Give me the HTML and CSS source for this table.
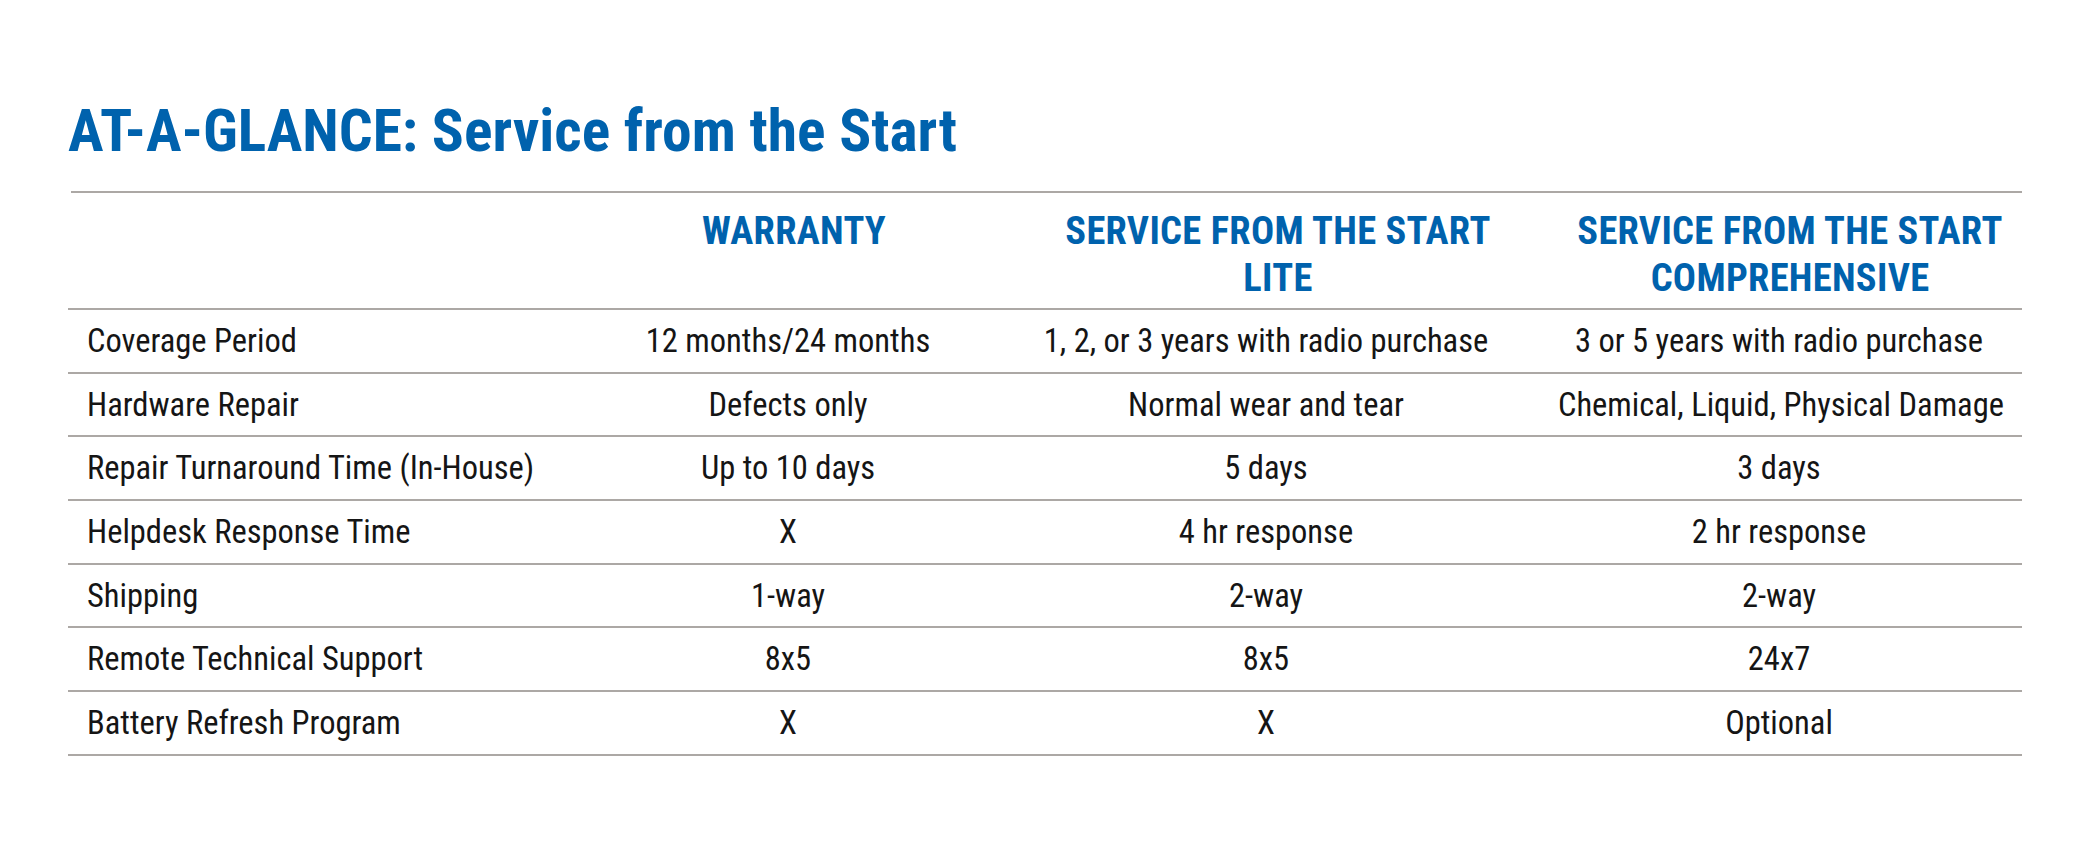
FILE: index.html
```html
<!DOCTYPE html>
<html lang="en">
<head>
<meta charset="utf-8">
<title>AT-A-GLANCE: Service from the Start</title>
<link rel="stylesheet" href="styles.css">
</head>
<body>
<main class="page">
  <h1 class="title">AT-A-GLANCE: Service from the Start</h1>
  <div class="rule"></div>
  <div class="table">
    <div class="row head">
      <div class="cell label"></div>
      <div class="cell c2">WARRANTY</div>
      <div class="cell c3">SERVICE FROM THE START<br>LITE</div>
      <div class="cell c4">SERVICE FROM THE START<br>COMPREHENSIVE</div>
    </div>
    <div class="row body">
      <div class="cell label">Coverage Period</div>
      <div class="cell c2">12 months/24 months</div>
      <div class="cell c3">1, 2, or 3 years with radio purchase</div>
      <div class="cell c4">3 or 5 years with radio purchase</div>
    </div>
    <div class="row body">
      <div class="cell label">Hardware Repair</div>
      <div class="cell c2">Defects only</div>
      <div class="cell c3">Normal wear and tear</div>
      <div class="cell c4">Chemical, Liquid, Physical Damage</div>
    </div>
    <div class="row body">
      <div class="cell label">Repair Turnaround Time (In-House)</div>
      <div class="cell c2">Up to 10 days</div>
      <div class="cell c3">5 days</div>
      <div class="cell c4">3 days</div>
    </div>
    <div class="row body">
      <div class="cell label">Helpdesk Response Time</div>
      <div class="cell c2">X</div>
      <div class="cell c3">4 hr response</div>
      <div class="cell c4">2 hr response</div>
    </div>
    <div class="row body">
      <div class="cell label">Shipping</div>
      <div class="cell c2">1-way</div>
      <div class="cell c3">2-way</div>
      <div class="cell c4">2-way</div>
    </div>
    <div class="row body">
      <div class="cell label">Remote Technical Support</div>
      <div class="cell c2">8x5</div>
      <div class="cell c3">8x5</div>
      <div class="cell c4">24x7</div>
    </div>
    <div class="row body">
      <div class="cell label">Battery Refresh Program</div>
      <div class="cell c2">X</div>
      <div class="cell c3">X</div>
      <div class="cell c4">Optional</div>
    </div>
  </div>
</main>
</body>
</html>
```

FILE: styles.css
```css
html, body {
  margin: 0;
  padding: 0;
  background: #ffffff;
}

body {
  font-family: "Roboto Condensed", "Liberation Sans", sans-serif;
  color: #151515;
}

.page {
  width: 2100px;
  height: 850px;
  padding: 101px 0 0 68px;
  box-sizing: border-box;
}

.title {
  margin: 0 0 30px 0;
  font-size: 59.5px;
  line-height: 60px;
  font-weight: 700;
  color: #0062ad;
}

.rule {
  width: 1951px;
  height: 2px;
  margin-left: 3px;
  background: #aca8a5;
}

.table {
  width: 1954px;
}

.row {
  display: grid;
  grid-template-columns: 514px 416px 560px 464px;
  height: 63.7px;
  box-sizing: border-box;
  align-items: center;
  border-bottom: 2px solid #aca8a5;
  font-size: 32.5px;
}

.cell {
  text-align: center;
  white-space: nowrap;
}

.cell.label {
  text-align: left;
  padding-left: 19px;
}

.body .c2 { padding-right: 4px; }
.body .c3 { padding-right: 24px; }
.body .c4 { padding-right: 22px; }

.row.head {
  height: 117px;
  align-items: start;
  padding-top: 14px;
  font-size: 38.5px;
  line-height: 47px;
  font-weight: 700;
  color: #0062ad;
  letter-spacing: 0.3px;
}

.head .c2 { padding-left: 8px; }
```
